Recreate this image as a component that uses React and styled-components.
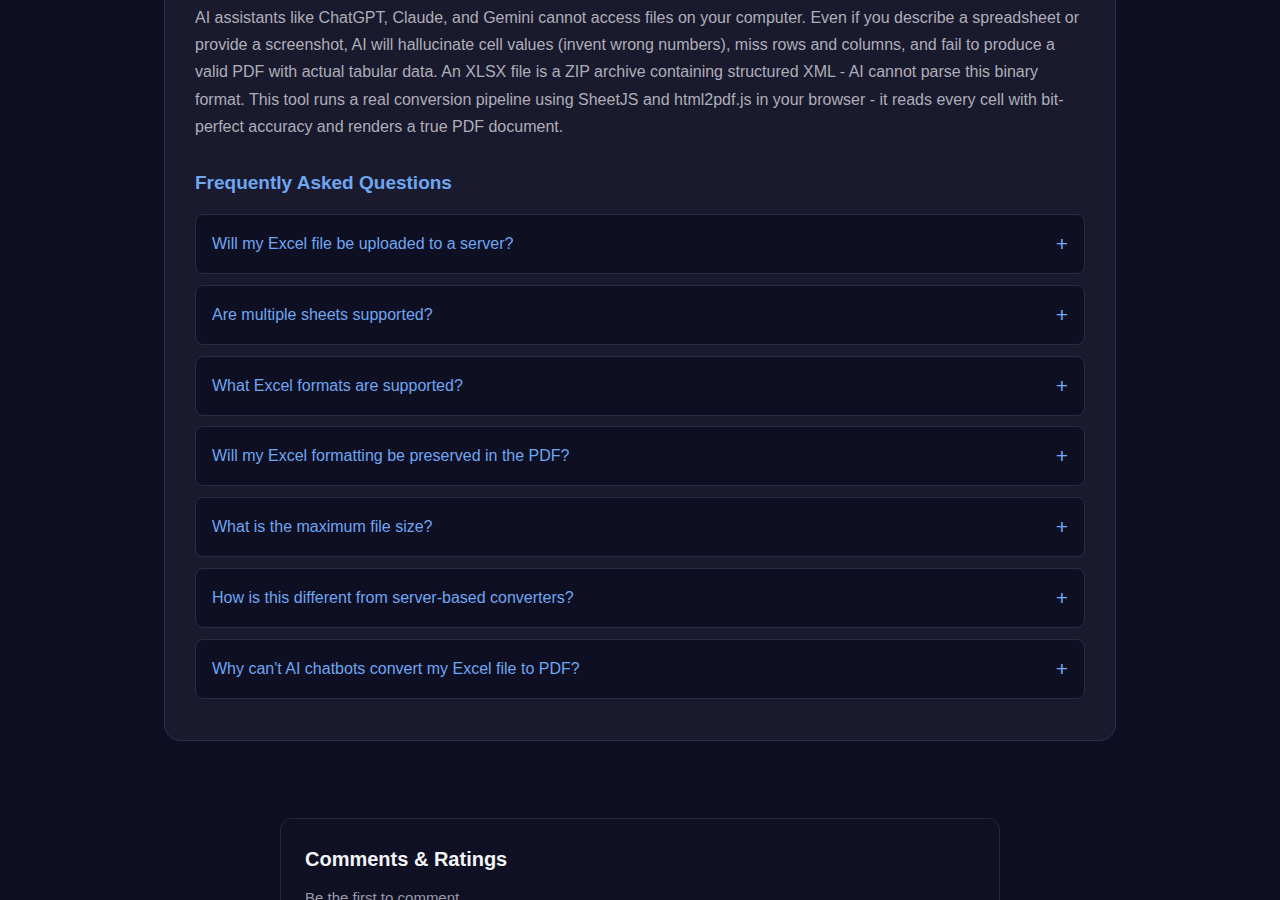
import React from 'react'
import styled, { createGlobalStyle } from 'styled-components'

const GlobalStyle = createGlobalStyle`
body{
  margin:0;
  background:#0f0f23;
  font-family:"Liberation Sans", Arial, sans-serif;
}
`

const Page = styled.div`
display:flex;
flex-direction:column;
align-items:center;
margin-top:-27px;
padding-bottom:40px;
`
const Card = styled.section`
width:952px;
box-sizing:border-box;
background:#1a1a2e;
border:1px solid #2c2c4e;
border-radius:16px;
padding:30px 30px 41px;
`
const Para = styled.p`
margin:0;
font-size:16px;
line-height:27.2px;
color:#aeaeb8;
`
const Heading = styled.h2`
margin:31px 0 19px;
font-size:19px;
line-height:24px;
font-weight:700;
color:#6ea6f0;
`
const List = styled.div`
display:flex;
flex-direction:column;
gap:10.8px;
`
const Item = styled.div`
background:#0f0f23;
border:1px solid #2a2a48;
border-radius:8px;
display:flex;
align-items:center;
justify-content:space-between;
padding:19px 16px;
`
const Question = styled.span`
font-size:16px;
line-height:20px;
color:#6ea6f0;
`
const Plus = styled.span`
font-size:21px;
line-height:20px;
color:#72a9f4;
`
const Comments = styled.section`
width:720px;
box-sizing:border-box;
margin-top:77px;
background:#0f1024;
border:1px solid #26263e;
border-radius:12px;
padding:27px 24px;
`
const CommentsTitle = styled.h3`
margin:0 0 16px;
font-size:20px;
line-height:26px;
font-weight:700;
color:#f4f4f8;
`
const Empty = styled.p`
margin:0;
font-size:15px;
line-height:20px;
color:#9a9aa8;
`

const questions = [
  'Will my Excel file be uploaded to a server?',
  'Are multiple sheets supported?',
  'What Excel formats are supported?',
  'Will my Excel formatting be preserved in the PDF?',
  'What is the maximum file size?',
  'How is this different from server-based converters?',
  "Why can't AI chatbots convert my Excel file to PDF?",
]

export default function App(){
  return(
    <Page>
      <GlobalStyle/>
      <Card>
        <Para>
          AI assistants like ChatGPT, Claude, and Gemini cannot access files on your computer. Even if you describe a spreadsheet or provide a screenshot, AI will hallucinate cell values (invent wrong numbers), miss rows and columns, and fail to produce a valid PDF with actual tabular data. An XLSX file is a ZIP archive containing structured XML - AI cannot parse this binary format. This tool runs a real conversion pipeline using SheetJS and html2pdf.js in your browser - it reads every cell with bit-perfect accuracy and renders a true PDF document.
        </Para>
        <Heading>Frequently Asked Questions</Heading>
        <List>
          {questions.map(q=>(
            <Item key={q}>
              <Question>{q}</Question>
              <Plus>+</Plus>
            </Item>
          ))}
        </List>
      </Card>
      <Comments>
        <CommentsTitle>Comments &amp; Ratings</CommentsTitle>
        <Empty>Be the first to comment.</Empty>
      </Comments>
    </Page>
  )
}
